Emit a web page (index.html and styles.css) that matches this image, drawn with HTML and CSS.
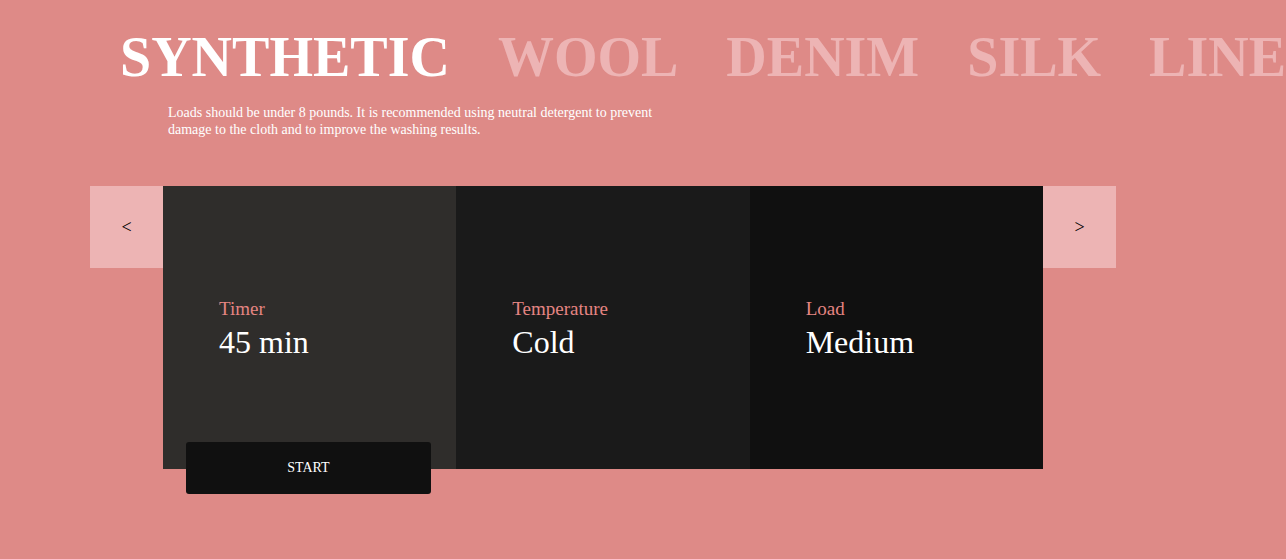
FILE: index.html
```html
<!DOCTYPE html>
<html lang="en">
<head>
<meta charset="utf-8">
<title>Washing programs</title>
<link rel="stylesheet" href="styles.css">
</head>
<body>
<main class="washer">
  <ul class="fabrics">
    <li class="fabric active">SYNTHETIC</li>
    <li class="fabric">WOOL</li>
    <li class="fabric">DENIM</li>
    <li class="fabric">SILK</li>
    <li class="fabric">LINE</li>
  </ul>
  <p class="description">Loads should be under 8 pounds. It is recommended using neutral detergent to prevent damage to the cloth and to improve the washing results.</p>
  <div class="carousel">
    <button class="arrow" type="button" aria-label="Previous">&lt;</button>
    <div class="panel">
      <section class="setting timer">
        <h2 class="label">Timer</h2>
        <p class="value">45 min</p>
      </section>
      <section class="setting temperature">
        <h2 class="label">Temperature</h2>
        <p class="value">Cold</p>
      </section>
      <section class="setting load">
        <h2 class="label">Load</h2>
        <p class="value">Medium</p>
      </section>
      <button class="start" type="button">START</button>
    </div>
    <button class="arrow" type="button" aria-label="Next">&gt;</button>
  </div>
</main>
</body>
</html>
```
FILE: styles.css
```css
* {
  box-sizing: border-box;
}

body {
  margin: 0;
  background: #de8a87;
  color: #fff;
  font-family: "Liberation Serif", "Times New Roman", serif;
}

.washer {
  overflow: hidden;
  padding: 25px 0 64px;
}

.fabrics {
  display: flex;
  gap: 48px;
  margin: 0;
  padding: 0 0 0 120px;
  list-style: none;
}

.fabric {
  flex: none;
  color: #edb4b4;
  font-size: 56px;
  font-weight: bold;
  line-height: 64px;
}

.fabric.active {
  color: #fff;
}

.description {
  max-width: 510px;
  margin: 15px 0 48px 168px;
  font-size: 14px;
  line-height: 17px;
}

.carousel {
  display: flex;
  align-items: flex-start;
  padding: 0 170px 0 90px;
}

.arrow {
  flex: none;
  width: 73px;
  height: 82px;
  padding: 0;
  border: 0;
  background: #edb4b4;
  color: #000;
  font-family: inherit;
  font-size: 18px;
}

.panel {
  position: relative;
  display: grid;
  flex: 1;
  grid-template-columns: repeat(3, 1fr);
}

.setting {
  padding: 111px 24px 106px 56px;
}

.timer {
  background: #2f2d2b;
}

.temperature {
  background: #1a1a1a;
}

.load {
  background: #101010;
}

.label {
  margin: 0;
  color: #e58582;
  font-size: 19px;
  font-weight: normal;
  line-height: 24px;
}

.value {
  margin: 0;
  font-size: 32px;
  line-height: 42px;
}

.start {
  position: absolute;
  bottom: -25px;
  left: 23px;
  width: 245px;
  height: 52px;
  border: 0;
  border-radius: 3px;
  background: #101010;
  color: #fff;
  font-family: inherit;
  font-size: 14px;
}
```
